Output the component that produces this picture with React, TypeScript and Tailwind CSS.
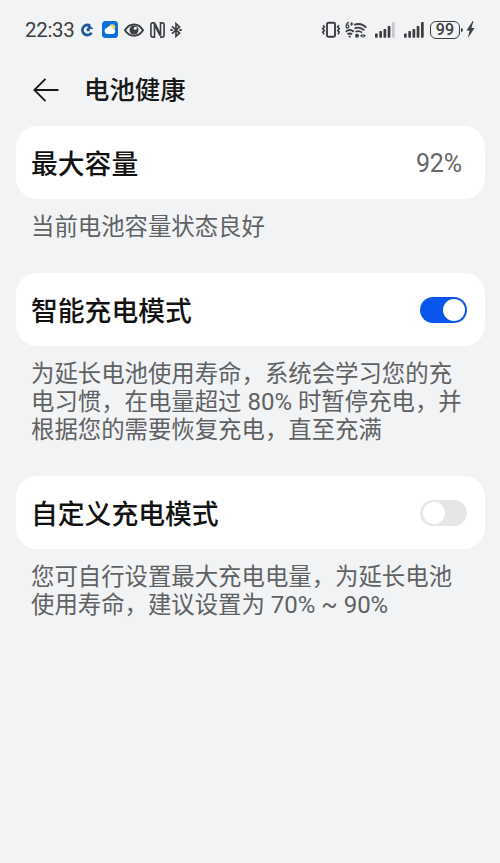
import type { ReactNode } from "react";

const latin = "font-['Roboto','Noto_Sans_CJK_SC',sans-serif]";

function SignalBars({ lastBar }: { lastBar: string }) {
  return (
    <svg className="h-4 w-5" viewBox="0 0 20 16" fill="currentColor">
      <rect x="0" y="11.5" width="2.7" height="4.3" rx=".7" />
      <rect x="4.3" y="9" width="2.7" height="6.8" rx=".7" />
      <rect x="8.5" y="7" width="2.7" height="8.8" rx=".7" />
      <rect x="12.7" y="4" width="2.7" height="11.8" rx=".7" />
      <rect x="17" y="0" width="2.7" height="15.8" rx=".7" fill={lastBar} />
    </svg>
  );
}

function StatusBar() {
  return (
    <div className="flex h-[59px] items-center justify-between pr-[25px] pl-[25px] text-[#3c3e40]">
      <div className="flex items-center">
        <span className={`w-[56px] pt-px text-[20.5px] leading-none tracking-[-0.3px] ${latin}`}>22:33</span>
        <svg className="h-[14px] w-[13px]" viewBox="0 0 13 14" fill="none">
          <path d="M10.600 9.800A5 5 0 1 1 9 2.700" stroke="#1d5d97" strokeWidth="2.800" />
          <path d="M8 1.500 12.600 6H8.500L6.300 3.600Z" fill="#1d5d97" />
          <path d="M6.500 4.800h2.300v3.400H5.600V5.700Z" fill="#1d5d97" />
        </svg>
        <svg className="ml-2 h-[17px] w-4" viewBox="0 0 16 17">
          <rect width="16" height="17" rx="3.500" fill="#0b70dc" />
          <circle cx="10.200" cy="6.300" r="3" fill="#f8d64b" />
          <path d="M5.300 13a3 3 0 0 1-.5-5.900A3.400 3.400 0 0 1 11 7.700a2.700 2.700 0 0 1 .2 5.300Z" fill="#fff" />
        </svg>
        <svg className="ml-[6px] h-4 w-5" viewBox="0 0 20 16" fill="none">
          <path d="M1 8.300C5.500.4 14.500.4 19 8.300C14.500 15.600 5.500 15.600 1 8.300Z" stroke="currentColor" strokeWidth="2" />
          <circle cx="10" cy="8" r="4.500" fill="currentColor" />
          <circle cx="11.300" cy="6.300" r="1.500" fill="#f1f3f5" />
        </svg>
        <svg className="ml-[6px] h-4 w-[15px]" viewBox="0 0 15 16" fill="none" stroke="currentColor" strokeWidth="1.600">
          <path d="M5 .9H3Q.9.9.9 3V13Q.9 15.100 3 15.100H4.500V2.500L10.500 13.500V.9H12Q14.100.9 14.100 3V13Q14.100 15.100 12 15.100H10" />
          <path d="M4.500 1.500 10.500 13.500" strokeWidth="2.400" />
        </svg>
        <svg className="ml-[5px] h-4 w-3" viewBox="0 0 12 16" fill="none" stroke="currentColor" strokeWidth="1.700">
          <path d="m2 4.300 7.500 6.800L6 14.300V1.700l3.500 3.200L2 11.700" />
          <path d="M.3 8h2.400M9.300 8h2.400" strokeWidth="2.200" />
        </svg>
      </div>

      <div className="flex items-center">
        <svg className="h-[18px] w-5" viewBox="0 0 20 18" fill="none" stroke="currentColor">
          <rect x="6" y="1.800" width="8" height="14" rx="1.200" strokeWidth="1.900" />
          <path d="m2.300 4.300 1 1.600-1.500 1.800 1.500 1.800-1.500 1.700 1.300 2M17.700 4.300l-1 1.600 1.500 1.800-1.500 1.800 1.500 1.700-1.300 2" strokeWidth="1.700" />
        </svg>
        <svg className="ml-1 h-[18px] w-[22px]" viewBox="0 0 22 18" fill="none" stroke="currentColor">
          <path d="M3.700 1Q.9 3 1.100 5.700A1.400 1.500 0 1 0 2.500 4" strokeWidth="1.300" />
          <path d="M5 3h3.400M6.700 1.300v3.400" strokeWidth="1.200" />
          <path d="M9.300 3.800Q16 1.300 21.300 6.600M9.500 7.300Q15 5.100 19.300 9.400M.8 10.800Q4.800 7.300 8.800 10.800M2.500 13.400Q4.800 11.600 7.100 13.400" strokeWidth="1.800" />
          <circle cx="4.800" cy="15.500" r="1.100" fill="currentColor" stroke="none" />
          <path d="M10.500 10.800Q14 9.300 17 11.600" strokeWidth="1.700" />
          <circle cx="12" cy="14.700" r="2" fill="currentColor" stroke="none" />
          <path d="M17.500 12.700v4L14.900 14.700ZM18.300 12.700v4L20.900 14.700Z" fill="currentColor" stroke="none" />
        </svg>
        <div className="ml-2 flex gap-[9px]">
          <SignalBars lastBar="#c6c8ca" />
          <SignalBars lastBar="currentColor" />
        </div>
        <div className={`ml-[6px] flex h-[18px] w-[30px] items-center justify-center rounded-[6px] border-[1.5px] border-current pt-px text-[16px] leading-none font-medium tracking-[0.2px] ${latin}`}>
          99
        </div>
        <div className="ml-px h-1 w-[2px] rounded-r bg-current" />
        <svg className="ml-[3px] h-[17px] w-[9px]" viewBox="0 0 8 17" fill="currentColor">
          <path d="M6.200 0 0 9.500h3L1.500 17 8 7H4.900L7 0Z" />
        </svg>
      </div>
    </div>
  );
}

function Toggle({ on = false }: { on?: boolean }) {
  return (
    <button
      role="switch"
      aria-checked={on}
      className={`flex h-[26px] w-[47px] items-center rounded-full px-[2.5px] ${on ? "justify-end bg-[#0a56ec]" : "justify-start bg-[#e6e6e6]"}`}
    >
      <span className="h-[22px] w-[22px] rounded-full bg-white" />
    </button>
  );
}

function Card({ title, children }: { title: string; children: ReactNode }) {
  return (
    <div className="mr-[15px] ml-4 flex h-[73px] items-center justify-between rounded-[21px] bg-white pr-[18px] pl-[15px]">
      <h2 className="pt-[2px] text-[26.8px] leading-none font-medium text-[#121212]">{title}</h2>
      {children}
    </div>
  );
}

function Note({ lines }: { lines: ReactNode[] }) {
  return (
    <div className="pt-[12px] pl-[31px] text-[23.4px] leading-[28px] whitespace-nowrap text-[#606163]">
      {lines.map((line, i) => (
        <p key={i} className="h-[28px]">
          {line}
        </p>
      ))}
    </div>
  );
}

function Num({ children }: { children: ReactNode }) {
  return <span className={`text-[24px] leading-none ${latin}`}>{children}</span>;
}

export default function App() {
  return (
    <main className="flex h-[863px] w-[500px] flex-col overflow-hidden bg-[#f1f3f5] font-['Noto_Sans_CJK_SC',sans-serif]">
      <StatusBar />
      <header className="flex h-[67px] items-center pb-[7px] pl-[33px]">
        <svg className="mt-px h-[26px] w-[26px]" viewBox="0 0 26 26" fill="none" stroke="#171717" strokeWidth="1.800">
          <path d="M25.500 13H1.500M12.500 1.800 1.300 13l11.200 11.200" />
        </svg>
        <h1 className="ml-[25px] text-[25.400px] leading-none font-medium text-[#171717]">电池健康</h1>
      </header>

      <section className="h-[147px]">
        <Card title="最大容量">
          <span className={`pt-[2px] pr-[5px] text-[25px] leading-none tracking-[-0.1px] text-[#656667] ${latin}`}>92%</span>
        </Card>
        <Note lines={["当前电池容量状态良好"]} />
      </section>

      <section className="h-[203px]">
        <Card title="智能充电模式">
          <Toggle on />
        </Card>
        <Note
          lines={[
            "为延长电池使用寿命，系统会学习您的充",
            <>电习惯，在电量超过<Num> 80% </Num>时暂停充电，并</>,
            "根据您的需要恢复充电，直至充满",
          ]}
        />
      </section>

      <section>
        <Card title="自定义充电模式">
          <Toggle />
        </Card>
        <Note
          lines={[
            "您可自行设置最大充电电量，为延长电池",
            <>使用寿命，建议设置为<Num> 70% ~ 90%</Num></>,
          ]}
        />
      </section>
    </main>
  );
}
